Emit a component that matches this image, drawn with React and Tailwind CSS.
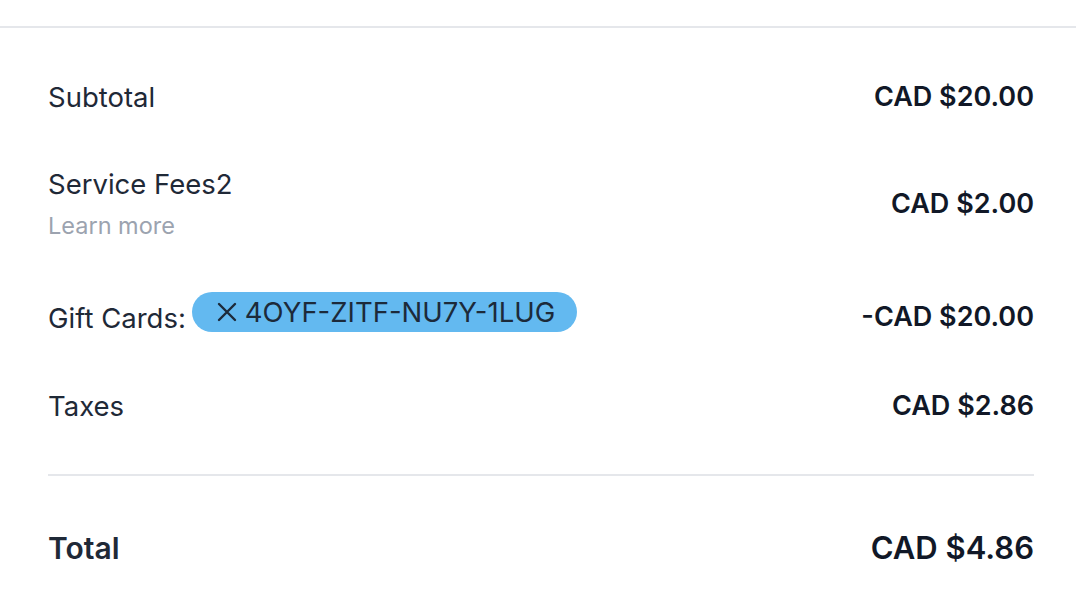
export default function App() {
    return (
        <div
            className="w-[1076px] h-[606px] bg-white overflow-hidden"
            style={{ fontFamily: "Inter, 'Noto Sans', sans-serif" }}
        >
            {/* top rule */}
            <div className="h-[28px] border-b-2 border-[#e5e7eb]" />

            <div className="pl-[48px] pr-[42px] flex flex-col text-[#1f2937]">
                {/* SUBTOTAL */}
                <div className="mt-[51px] flex items-center justify-between h-[36px]">
                    <span className="text-[27.5px] leading-[36px]">Subtotal</span>
                    <span className="text-[27px] leading-[36px] font-semibold text-[#111827]">
                        CAD $20.00
                    </span>
                </div>

                {/* SERVICE FEES */}
                <div className="mt-[51px] flex items-center justify-between">
                    <div className="flex flex-col gap-[8px]">
                        <span className="text-[27.5px] leading-[36px]">Service Fees2</span>
                        <span className="text-[23.5px] leading-[32px] text-[#9ca3af]">
                            Learn more
                        </span>
                    </div>
                    <span className="text-[27px] leading-[36px] font-semibold text-[#111827]">
                        CAD $2.00
                    </span>
                </div>

                {/* GIFT CARDS */}
                <div className="mt-[50px] flex items-center justify-between h-[40px]">
                    <div className="flex items-center gap-[6px]">
                        <span className="text-[27.5px] leading-[36px] pt-[11px]">Gift Cards:</span>
                        <span className="flex items-center gap-[8px] h-[40px] pl-[25px] pr-[22px] rounded-full bg-[#63b9f0] text-[#1c2a3a] text-[27.5px] leading-[36px]">
                            <svg width="20" height="20" viewBox="0 0 20 20" fill="none">
                                <path
                                    d="M2 2 L18 18 M18 2 L2 18"
                                    stroke="#1c2a3a"
                                    strokeWidth="2.4"
                                    strokeLinecap="round"
                                />
                            </svg>
                            4OYF-ZITF-NU7Y-1LUG
                        </span>
                    </div>
                    <span className="text-[27px] leading-[36px] pt-[9px] font-semibold text-[#111827]">
                        -CAD $20.00
                    </span>
                </div>

                {/* TAXES */}
                <div className="mt-[56px] flex items-center justify-between h-[36px]">
                    <span className="text-[27.5px] leading-[36px]">Taxes</span>
                    <span className="text-[27px] leading-[36px] font-semibold text-[#111827]">
                        CAD $2.86
                    </span>
                </div>

                <div className="mt-[50px] h-[2px] bg-[#e5e7eb]" />

                {/* TOTAL */}
                <div className="mt-[52px] flex items-center justify-between h-[40px]">
                    <span className="text-[30px] leading-[40px] font-semibold">Total</span>
                    <span className="text-[31px] leading-[40px] font-semibold text-[#111827]">
                        CAD $4.86
                    </span>
                </div>
            </div>
        </div>
    );
}
